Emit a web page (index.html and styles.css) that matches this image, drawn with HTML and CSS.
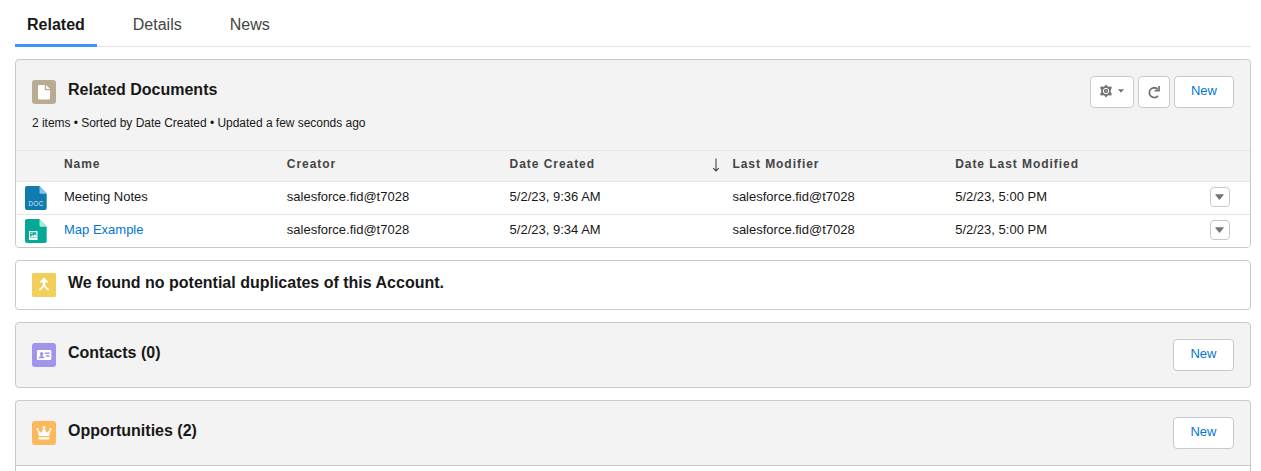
FILE: index.html
```html
<!DOCTYPE html>
<html lang="en">
<head>
<meta charset="utf-8">
<title>Account</title>
<link rel="stylesheet" href="styles.css">
</head>
<body>
<nav class="tabs">
  <a class="tab active">Related</a><a class="tab">Details</a><a class="tab">News</a>
</nav>

<main class="cards">
  <section class="card documents">
    <header class="doc-head">
      <svg class="icon" viewBox="0 0 24 24"><rect width="24" height="24" rx="3" fill="#baac93"/><path d="M7.3 5H12.800v4.200c0 .6.4 1 1 1h4.200v8.100c0 .7-.5 1.200-1.200 1.200H7.300C6.500 19.500 6 19 6 18.300V6.300C6 5.500 6.500 5 7.300 5zM14.100 5l3.900 3.900h-3.400c-.3 0-.5-.2-.5-.5z" fill="#fff"/></svg>
      <h2 class="title">Related Documents</h2>
      <div class="actions">
        <button class="btn settings">
          <svg class="gear" viewBox="0 0 14 14"><path d="M7 .5l2 2.300 3.200-.4 .6 1L11.500 7l1.300 3.600-.6 1-3.200-.4L7 13.500l-2-2.300-3.200.4-.6-1L2.500 7 1.200 3.400l.6-1 3.200.4z" fill="#747474"/><circle cx="7" cy="7" r="2.700" fill="#747474" stroke="#fff" stroke-width="1"/><circle cx="7" cy="7" r=".9" fill="#aaa"/></svg>
          <svg class="caret" viewBox="0 0 6 4"><path d="M0 .3h6L3 3.700z" fill="#747474"/></svg>
        </button>
        <button class="btn refresh">
          <svg class="reload" viewBox="0 0 14 14"><path d="M11 10.800A4.900 4.900 0 1 1 11 4.500" fill="none" stroke="#747474" stroke-width="1.800"/><path d="M12.900 1v5.500H7.500V5h3.700V1z" fill="#747474"/></svg>
        </button>
        <button class="btn new">New</button>
      </div>
    </header>
    <p class="meta">2 items • Sorted by Date Created • Updated a few seconds ago</p>
    <div class="row head">
      <span></span><span>Name</span><span>Creator</span><span class="sorted">Date Created<svg class="arrow" viewBox="0 0 8 14"><path d="M4 .5v12M1.200 10.200L4 13l2.800-2.800" fill="none" stroke="#444" stroke-width="1.100"/></svg></span><span>Last Modifier</span><span>Date Last Modified</span><span></span>
    </div>
    <div class="row">
      <svg class="file" viewBox="0 0 22 24"><path d="M2 0h12.500L21.700 7.800V22a2 2 0 0 1-2 2H2a2 2 0 0 1-2-2V2a2 2 0 0 1 2-2z" fill="#107cad"/><path d="M14.500 0L21.700 7.800h-5.700a1.500 1.500 0 0 1-1.500-1.500z" fill="#84c1fb"/><text class="file-type" x="3.600" y="20.400">DOC</text></svg>
      <span>Meeting Notes</span><span>salesforce.fid@t7028</span><span>5/2/23, 9:36 AM</span><span>salesforce.fid@t7028</span><span>5/2/23, 5:00 PM</span>
      <button class="menu"><svg class="down" viewBox="0 0 9 6"><path d="M.8.300h7.400c.5 0 .7.400.4.800L4.900 5.400c-.2.300-.6.300-.8 0L.4 1.100C.1.700.3.300.8.300z" fill="#747474"/></svg></button>
    </div>
    <div class="row">
      <svg class="file" viewBox="0 0 22 24"><path d="M2 0h12.500L21.700 7.800V22a2 2 0 0 1-2 2H2a2 2 0 0 1-2-2V2a2 2 0 0 1 2-2z" fill="#04a897"/><path d="M14.500 0L21.700 7.800h-5.700a1.500 1.500 0 0 1-1.500-1.500z" fill="#a0f3d6"/><rect x="4" y="12" width="8.500" height="9" rx=".5" fill="#fff"/><path d="M5.200 13.200h6.100v5.300H5.200z" fill="#04a897"/><path d="M5.600 18l1.800-2 1 1 1.500-2 1.100 1.500V18z" fill="#fff"/><circle cx="7" cy="14.500" r=".7" fill="#fff"/></svg>
      <span class="link">Map Example</span><span>salesforce.fid@t7028</span><span>5/2/23, 9:34 AM</span><span>salesforce.fid@t7028</span><span>5/2/23, 5:00 PM</span>
      <button class="menu"><svg class="down" viewBox="0 0 9 6"><path d="M.8.300h7.400c.5 0 .7.400.4.800L4.900 5.400c-.2.300-.6.300-.8 0L.4 1.100C.1.700.3.300.8.300z" fill="#747474"/></svg></button>
    </div>
  </section>

  <section class="card duplicates">
    <svg class="icon" viewBox="0 0 24 24"><rect width="24" height="24" rx="1.500" fill="#f2cf5b"/><path d="M12 4.500l4.100 4.300q.3.700-.5.700h-2.400v2.900l3.500 3.700c.7.900-.5 2-1.300 1.200L12 13.800l-3.400 3.500c-.8.800-2-.3-1.300-1.200l3.500-3.700V9.500H8.400q-.8 0-.5-.7z" fill="#fff"/></svg>
    <h2 class="title">We found no potential duplicates of this Account.</h2>
  </section>

  <section class="card simple">
    <svg class="icon" viewBox="0 0 24 24"><rect width="24" height="24" rx="3" fill="#a094ed"/><rect x="4.900" y="7" width="14.400" height="10" rx="1.300" fill="#fff"/><path d="M6.700 15.200c0-1.100.7-1.600 2.100-2.100-.6-.5-.9-1.200-.9-2 0-1.300.7-2 1.700-2s1.700.7 1.700 2c0 .8-.3 1.500-.9 2 1.400.5 2.100 1 2.100 2.100zM12.800 9.600h4.800v1.400h-4.800zm1.100 2.700h3.700v1.400h-3.700z" fill="#a094ed"/></svg>
    <h2 class="title">Contacts (0)</h2>
    <button class="btn new">New</button>
  </section>

  <section class="card simple opportunities">
    <svg class="icon" viewBox="0 0 24 24"><rect width="24" height="24" rx="3" fill="#fcb95b"/><path d="M5.400 8.400l3 2.900q.8.400 1.300-.4L12 6.300l2.300 4.600q.5.800 1.300.4l3-2.900-1.400 6.500H6.800z" fill="#fff"/><g fill="#fff"><circle cx="5.500" cy="8.100" r="1.200"/><circle cx="12" cy="6.300" r="1.400"/><circle cx="18.500" cy="8.100" r="1.200"/><rect x="6.500" y="16.300" width="11" height="2.100" rx="1"/></g></svg>
    <h2 class="title">Opportunities (2)</h2>
    <button class="btn new">New</button>
  </section>
</main>
</body>
</html>
```
FILE: styles.css
```css
* { box-sizing: border-box; }
body {
  margin: 0;
  padding: 0 10px 0 15px;
  background: #fff;
  color: #181818;
  font: 13px/20px "Liberation Sans", Arial, sans-serif;
}
svg { display: block; }
.tabs {
  display: flex;
  gap: 24px;
  height: 47px;
  border-bottom: 1px solid #e5e5e5;
}
.tab {
  height: 47px;
  padding: 5px 12px 0;
  font-size: 16px;
  line-height: 40px;
  color: #444;
}
.tab.active {
  color: #181818;
  font-weight: 700;
  border-bottom: 3px solid #3f91fb;
}
.cards { display: flex; flex-direction: column; gap: 12px; padding-top: 12px; }
.card {
  border: 1px solid #c9c9c9;
  border-radius: 4px;
  background: #f3f3f3;
  flex: none;
}
.documents { height: 189px; overflow: hidden; }
.doc-head { display: flex; height: 53px; padding: 16px 16px 0; }
.icon { width: 24px; height: 24px; flex: none; margin-top: 4px; }
.title {
  margin: 4px 0 0 12px;
  font-size: 16px;
  line-height: 20px;
  font-weight: 700;
}
.actions { display: flex; gap: 4px; margin-left: auto; }
.btn {
  display: flex;
  align-items: center;
  justify-content: center;
  height: 32px;
  padding: 0;
  border: 1px solid #c9c9c9;
  border-radius: 4px;
  background: #fff;
  color: #0176d3;
  font: 13px/28px "Liberation Sans", Arial, sans-serif;
}
.new { width: 60px; padding-bottom: 2px; }
.settings { width: 44px; gap: 5px; padding: 0 2px 2px 0; }
.refresh { width: 32px; }
.gear { width: 14px; height: 14px; }
.caret { width: 6px; height: 4px; }
.reload { width: 14px; height: 14px; }
.meta { margin: 0; padding: 0 16px; height: 37px; font-size: 12px; line-height: 20px; letter-spacing: -.03px; }
.row {
  display: grid;
  grid-template-columns: 48px repeat(4, 222.8px) 254.8px 20px;
  align-items: center;
  height: 33px;
  padding-bottom: 3px;
  border-top: 1px solid #e5e5e5;
  background: #fff;
}
.head {
  height: 31px;
  padding-bottom: 4px;
  background: #f3f3f3;
  color: #444;
  font-size: 12px;
  font-weight: 700;
  letter-spacing: .95px;
}
.sorted { display: flex; align-items: center; justify-content: space-between; padding-right: 12px; }
.arrow { width: 8px; height: 14px; margin-top: 2px; }
.file { width: 22px; height: 24px; margin: 2px 0 0 9px; }
.file-type { font-size: 6.3px; letter-spacing: .4px; fill: #d5e8f1; }
.link { color: #0176d3; }
.menu {
  display: flex;
  align-items: center;
  justify-content: center;
  width: 20px;
  height: 20px;
  margin-top: 1px;
  padding: 0;
  border: 1px solid #c9c9c9;
  border-radius: 4px;
  background: #fff;
}
.down { width: 9px; height: 6px; }
.duplicates { display: flex; height: 50px; padding: 8px 16px; background: #fff; }
.simple { display: flex; height: 66px; padding: 16px 16px 0; }
.simple .new { width: 61px; margin-left: auto; }
.opportunities { height: 71px; border-bottom: 0; border-radius: 4px 4px 0 0; background: linear-gradient(#f3f3f3 64px, #c9c9c9 64px, #c9c9c9 65px, #fff 65px); }
```
